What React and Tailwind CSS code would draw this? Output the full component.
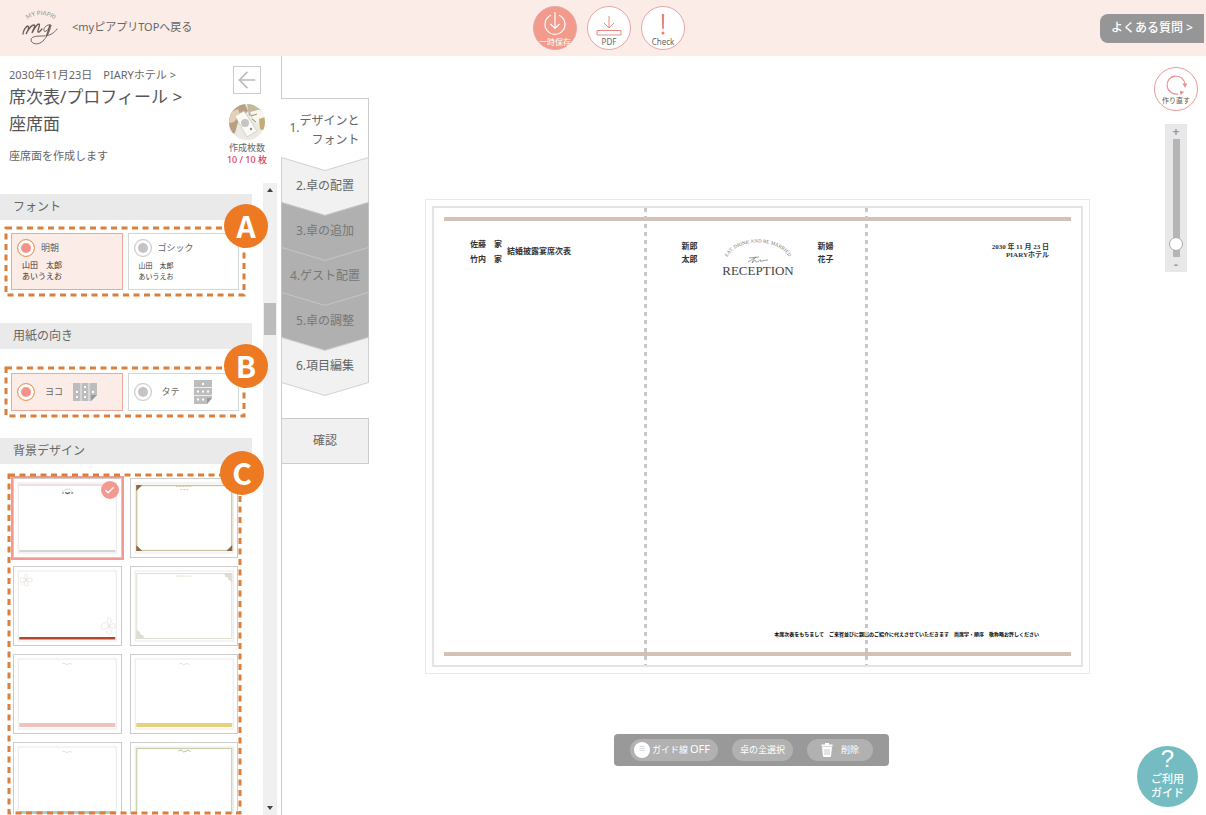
import React, { useState } from "react";
import { ArrowLeft, Check } from "lucide-react";

const steps = [
  { label: "2.卓の配置", locked: false },
  { label: "3.卓の追加", locked: true },
  { label: "4.ゲスト配置", locked: true },
  { label: "5.卓の調整", locked: true },
  { label: "6.項目編集", locked: false },
];

const designs = [
  { id: "reception", kind: "lines" },
  { id: "gold-corner", kind: "corner" },
  { id: "red-floral", kind: "bar", color: "#b5442f", thin: true, flower: true },
  { id: "lace", kind: "lace" },
  { id: "pink", kind: "bar", color: "#efc3bd" },
  { id: "yellow", kind: "bar", color: "#e3d37c" },
  { id: "mint", kind: "bar", color: "#a9cfc6" },
  { id: "leaf", kind: "leaf" },
];

function Logo() {
  return (
    <svg viewBox="0 0 36 36" className="h-9 w-9 overflow-visible" fill="none" stroke="#6b5a55" strokeLinecap="round">
      <path id="logoArc" d="M3 11 Q18 -1 35 11" stroke="none" />
      <text fontSize="6" fill="#a08f8a" stroke="none" fontFamily="Lato, sans-serif">
        <textPath href="#logoArc" startOffset="50%" textAnchor="middle">MY PIAPRI</textPath>
      </text>
      <path d="M1 24c0-3 3-8 5-8 2 1-1 6-2 8 2-4 5-9 8-9 2 0-1 5-2 8 2-4 5-9 7-9 2 1-2 6-1 8 1 1 3-2 4-3" strokeWidth="1.3" />
      <path d="M28 15c-3-1-7 3-6 6 1 2 5-2 7-6-1 6-5 15-11 18-4 2-9 0-9-3 0-4 7-4 12-4 7 0 11-3 14-7" strokeWidth="0.9" />
      <path d="M28 15l-3 10" strokeWidth="1.5" />
    </svg>
  );
}

function RoundButton({ label, filled, children }) {
  return (
    <button
      type="button"
      className={`flex h-11 w-11 flex-col items-center justify-end rounded-full border border-[#e9a5a5] pb-px text-[8px] leading-3 ${
        filled ? "bg-[#f29a8c] text-white" : "bg-white text-[#666]"
      }`}
    >
      {children}
      <span className="whitespace-nowrap">{label}</span>
    </button>
  );
}

function Header() {
  return (
    <header className="grid h-14 shrink-0 grid-cols-[1fr_auto_1fr] items-center bg-[#fbece7]">
      <div className="flex items-center gap-3.5 pl-[22px]">
        <Logo />
        <a href="#top" className="pb-0.5 text-[11px] text-[#666]">&lt;myピアプリTOPへ戻る</a>
      </div>
      <div className="flex gap-2.5 pl-3">
        <RoundButton label="一時保存" filled>
          <svg viewBox="0 0 24 24" className="h-6 w-6" fill="none" stroke="currentColor" strokeWidth="1.2">
            <path d="M8 3.2a10 10 0 1 0 8 0M12 0v16M7.500 12l4.500 4.500 4.500-4.500" />
          </svg>
        </RoundButton>
        <RoundButton label="PDF">
          <svg viewBox="0 0 26 20" className="h-5 w-[26px]" fill="none" stroke="#e58b84">
            <path d="M13 0v12M8 7l5 5 5-5M1 14.500h24v4.500H1z" />
          </svg>
        </RoundButton>
        <RoundButton label="Check">
          <svg viewBox="0 0 6 24" className="h-6 w-1.5" fill="#ea8278">
            <path d="M1.800 2h2.400l-.4 15H2.200z" />
            <circle cx="3" cy="21" r="1.500" />
          </svg>
        </RoundButton>
      </div>
      <a href="#faq" className="mr-0.5 justify-self-end rounded-l-lg bg-[#969696] px-[11px] pb-[7px] pt-[5px] text-xs font-medium leading-[17px] text-white">
        よくある質問 &gt;
      </a>
    </header>
  );
}

function ProductPhoto() {
  return (
    <svg viewBox="0 0 36 36" className="h-9 w-9">
      <clipPath id="photoClip"><circle cx="18" cy="18" r="18" /></clipPath>
      <g clipPath="url(#photoClip)">
        <rect width="36" height="36" fill="#ebe9e3" />
        <path d="M0 0h16l3 7-9 8-4 14-6 2z" fill="#b8a084" />
        <path d="M0 9l9-4 2 5-6 8-5 1z" fill="#e3d0b5" />
        <path d="M18 0h18v8l-16 4z" fill="#c4b99b" />
        <path d="M21 8l12-3 3 12-9 2z" fill="#f7f6f1" />
        <path d="M30 15l6-2v14l-5-2z" fill="#c1ac74" />
        <path d="M6 12l9-5 13 20-10 6z" fill="#fbfaf7" stroke="#c9c1b2" strokeWidth="0.600" />
        <circle cx="16" cy="19" r="4" fill="#c8c4c2" />
        <path d="M22 12l6-2M23 15l4 3" stroke="#a6914d" />
        <circle cx="22" cy="25" r="1.200" fill="#8b9a67" />
      </g>
    </svg>
  );
}

function Annotation({ letter }) {
  return (
    <>
      <svg
        className="pointer-events-none absolute inset-px h-[calc(100%-2px)] w-[calc(100%-2px)] overflow-visible"
        fill="none"
        aria-hidden="true"
      >
        <rect width="100%" height="100%" stroke="#dc7f3b" strokeWidth="3" strokeDasharray="6 4.500" />
      </svg>
      <span className="absolute -right-[23px] -top-[23px] flex h-11 w-11 items-center justify-center rounded-full bg-[#ed7a23] pb-0.5 font-['Noto_Sans_CJK_JP',sans-serif] text-3xl font-bold text-white">
        {letter}
      </span>
    </>
  );
}

function SectionTitle({ children }) {
  return <h2 className="mr-[11px] bg-[#eaeaea] pl-[13px] text-xs leading-[26px] text-[#666]">{children}</h2>;
}

function Option({ name, label, checked, onChange, children, preview }) {
  return (
    <label className={`block border px-[5px] py-1 ${checked ? "border-[#efa79c] bg-[#fbece8]" : "border-[#d3d8d9] bg-white"}`}>
      <span className={`flex h-5 items-center text-[9px] text-[#666] ${preview ? "gap-1.5" : "gap-2.5"}`}>
        <input
          type="radio"
          name={name}
          checked={checked}
          onChange={onChange}
          className="h-[18px] w-[18px] shrink-0 appearance-none rounded-full border border-[#ccc] bg-[#c4c4c4] shadow-[inset_0_0_0_3px_white] checked:border-[#e6a052] checked:bg-[#f2938a]"
        />
        {label}
        {children}
      </span>
      {preview}
    </label>
  );
}

function PaperIcon({ tall }) {
  if (tall) {
    return (
      <svg viewBox="0 0 18 24" className="ml-1 h-6 w-[18px]">
        <path d="M0 0h18v18l-5 6H0z" fill="#bdbdbd" />
        <path d="M0 7.500h18M0 15.500h18" stroke="#eee" />
        <path d="M8 3h2v2H8zM3 10.500h2v2H3zM8 10.500h2v2H8zM13 10.500h2v2h-2zM3 18.500h2v2H3zM8 18.500h2v2H8z" fill="#fff" />
        <path d="M13 18h5l-5 6z" fill="#999" />
      </svg>
    );
  }
  return (
    <svg viewBox="0 0 24 18" className="h-[18px] w-6">
      <path d="M0 0h24v12l-6 6H0z" fill="#bdbdbd" />
      <path d="M8 0v18M16 0v18" stroke="#eee" />
      <path d="M3 8h2v2H3zM3 13h2v2H3zM11 3h2v2h-2zM11 8h2v2h-2zM11 13h2v2h-2zM19 8h2v2h-2z" fill="#fff" />
      <path d="M18 12h6l-6 6z" fill="#999" />
    </svg>
  );
}

function DesignArt({ design }) {
  const { kind, color, thin, flower } = design;
  return (
    <svg viewBox="0 0 100 72" className="h-full w-full" fill="none">
      <rect x="1" y="1" width="98" height="70" stroke="#e9e9e9" />
      {kind === "lines" && (
        <>
          <path d="M2 3h96" stroke="#ecd0d3" strokeWidth="1.500" />
          <path d="M2 69h96" stroke="#aaa" />
          <path d="M45 10q5-6 10 0" stroke="#bbb" strokeWidth="0.600" />
          <path d="M45 11h1.500M48 10.500l2 1 3-1M54 11h2" stroke="#555" strokeWidth="1.200" />
        </>
      )}
      {kind === "corner" && (
        <>
          <rect x="2.500" y="3.500" width="95" height="65" stroke="#c9c3a3" strokeWidth="1.300" />
          <path d="M2 3h6l-6 6zM98 3h-6l6 6zM2 69h6l-6-6zM98 69h-6l6-6z" fill="#8d6a45" />
          <path d="M42 4.500h16M46 7.500h8" stroke="#d9cfa4" strokeDasharray="2 1" />
        </>
      )}
      {kind === "lace" && (
        <>
          <rect x="2.500" y="3.500" width="95" height="65" stroke="#e0dfd0" />
          <path d="M88 3h10v10q-2-3-4-3 1-3-3-3 0-3-3-4zM2 69V59q2 3 4 3-1 3 3 3 0 3 3 4z" fill="#deddd3" />
          <path d="M42 6h16" stroke="#d9d8bf" strokeDasharray="2 1" />
        </>
      )}
      {kind === "leaf" && (
        <>
          <rect x="2.500" y="2.500" width="95" height="75" stroke="#c8cda7" strokeWidth="1.200" />
          <path d="M44 5q3-2 4 0t4 0 4 1" stroke="#bdb9a3" />
        </>
      )}
      {kind === "bar" && (
        <>
          <rect x="2" y={thin ? 67 : 65} width="96" height={thin ? 2.5 : 4} fill={color} />
          {!flower && <path d="M45 6q2-1.500 3 0t3 0 4 .5" stroke="#dedbd6" strokeWidth="0.800" />}
        </>
      )}
      {flower && (
        <g stroke="#e6e0d8" strokeWidth="0.700">
          <path d="M9 10q-5-5-6 0t6 0q-4 5 0 6t0-6q5 4 6 0t-6 0q3-5 0-6t0 6M9 10l-5 5" />
          <path d="M92 56q-6-7-8 0t8 0q-5 7 0 8t0-8q6 5 6 0t-6 0q4-7 0-8t0 8" />
        </g>
      )}
    </svg>
  );
}

function Sidebar() {
  const [font, setFont] = useState("mincho");
  const [direction, setDirection] = useState("yoko");
  const [selected, setSelected] = useState("reception");

  return (
    <aside className="flex w-[281px] shrink-0 flex-col">
      <div className="flex h-[127px] shrink-0 justify-between pl-[9px] pr-3.5 pt-2.5 text-[#666]">
        <div>
          <p className="text-[11px] leading-[17px]">2030年11月23日　PIARYホテル &gt;</p>
          <h1 className="text-[17px] leading-[27px] text-[#555]">
            席次表/プロフィール &gt;
            <br />
            座席面
          </h1>
          <p className="mt-2.5 text-[11px] leading-[18px]">座席面を作成します</p>
        </div>
        <div className="flex flex-col items-center text-[9px] leading-3">
          <button type="button" aria-label="戻る" className="flex h-7 w-7 items-center justify-center border border-[#ccc] text-[#bbb]">
            <ArrowLeft size={26} strokeWidth={1.6} />
          </button>
          <div className="mb-0.5 mt-2.5">
            <ProductPhoto />
          </div>
          <span>作成枚数</span>
          <span className="whitespace-nowrap font-medium text-[#e0405a]">10 / 10 枚</span>
        </div>
      </div>

      <div className="flex min-h-0 flex-1">
        <div className="relative z-10 flex w-[263px] flex-col pt-[11px]">
          <SectionTitle>フォント</SectionTitle>
          <div className="relative ml-[5px] mr-[18px] mt-[7px] grid grid-cols-2 gap-[5px] p-1.5">
            <Option
              name="font"
              label="明朝"
              checked={font === "mincho"}
              onChange={() => setFont("mincho")}
              preview={
                <span className="block pb-[3px] pl-[5px] pt-0.5 font-['Liberation_Serif','Noto_Sans_CJK_JP',serif] text-[8px] leading-[11px] text-[#333]">
                  山田　太郎<br />あいうえお
                </span>
              }
            />
            <Option
              name="font"
              label="ゴシック"
              checked={font === "gothic"}
              onChange={() => setFont("gothic")}
              preview={
                <span className="block pb-[3px] pl-[5px] pt-0.5 text-[7px] leading-[11px] text-[#333]">
                  山田　太郎<br />あいうえお
                </span>
              }
            />
            <Annotation letter="A" />
          </div>

          <div className="mt-[27px]">
            <SectionTitle>用紙の向き</SectionTitle>
          </div>
          <div className="relative ml-[5px] mr-[18px] mt-[18px] grid grid-cols-2 gap-[5px] p-1.5 [&_label]:py-2">
            <Option name="direction" label="ヨコ" checked={direction === "yoko"} onChange={() => setDirection("yoko")}>
              <PaperIcon />
            </Option>
            <Option name="direction" label="タテ" checked={direction === "tate"} onChange={() => setDirection("tate")}>
              <PaperIcon tall />
            </Option>
            <Annotation letter="B" />
          </div>

          <div className="mt-[21px]">
            <SectionTitle>背景デザイン</SectionTitle>
          </div>
          <div className="relative mb-px ml-2 mr-[22px] mt-[10px] min-h-0 flex-1">
            <div className="grid h-full grid-cols-2 content-start gap-2 overflow-hidden pl-[5px] pr-[3px] pt-1">
              {designs.map((design) => (
                <button
                  key={design.id}
                  type="button"
                  aria-label={design.id}
                  onClick={() => setSelected(design.id)}
                  className={`relative h-20 p-[3px] ${
                    selected === design.id ? "outline-2 outline-[#f29a90]" : ""
                  } border border-[#ccc] bg-white`}
                >
                  <DesignArt design={design} />
                  {selected === design.id && (
                    <span className="absolute right-0.5 top-0.5 flex h-[18px] w-[18px] items-center justify-center rounded-full bg-[#f29a90] text-white">
                      <Check size={11} strokeWidth={3} />
                    </span>
                  )}
                </button>
              ))}
            </div>
            <Annotation letter="C" />
          </div>
        </div>

        <div className="flex w-3.5 flex-col items-center bg-[#f0f0f0] py-[5px]">
          <svg viewBox="0 0 6 4" className="h-1 w-1.5" fill="#444"><path d="M0 4l3-4 3 4z" /></svg>
          <span className="mt-[111px] h-8 w-3 bg-[#bcbcbc]" />
          <svg viewBox="0 0 6 4" className="mt-auto h-1 w-1.5" fill="#444"><path d="M0 0l3 4 3-4z" /></svg>
        </div>
      </div>
    </aside>
  );
}

function StepNav() {
  return (
    <nav className="flex w-[88px] shrink-0 flex-col text-xs text-[#666]">
      <span className="h-[42px] border-l border-[#ccc]" />
      <button type="button" className="flex h-[59px] items-center justify-center border-r border-t border-[#ccc] pt-1 leading-[19px]">
        <span className="pb-1.5">1.</span>
        <span className="text-right">デザインと<br />フォント</span>
      </button>
      {steps.map((step) => (
        <button key={step.label} type="button" className="relative h-[45px] pt-3">
          <svg viewBox="0 0 88 59" className="absolute left-0 top-0 h-[59px] w-[88px]" aria-hidden="true">
            <path
              d="M.5 .5L44 13.500 87.500 .5V45.500L44 58.500 .5 45.500z"
              fill={step.locked ? "#b0b0b0" : "#f1f1f1"}
              stroke={step.locked ? "#c2c2c2" : "#d0d0d0"}
            />
          </svg>
          <span className={`relative ${step.locked ? "text-[#777]" : ""}`}>{step.label}</span>
        </button>
      ))}
      <span className="h-[36px] border-l border-[#ccc]" />
      <button type="button" className="h-[46px] border border-[#ccc] bg-[#f0f0f0]">確認</button>
      <span className="flex-1 border-l border-[#ccc]" />
    </nav>
  );
}

function Emblem() {
  return (
    <svg viewBox="0 0 72 42" className="h-[42px] w-[72px] font-normal" fill="#444">
      <path id="emblemArc" d="M4 22 C14 0 58 0 68 22" fill="none" />
      <text fontSize="5" fill="#777" fontFamily="'Liberation Serif', serif">
        <textPath href="#emblemArc" startOffset="50%" textAnchor="middle">EAT, DRINK AND BE MARRIED</textPath>
      </text>
      <path d="M26 25c4-2 6-4 8-5-2 2-4 5-4 6 2-2 3-3 4-2 0 1 0 2 3 0 2-2 2-1 1 0 1 1 4-1 8-1M27 21l10-1" fill="none" stroke="#777" strokeWidth="0.700" />
      <text x="36" y="38" textAnchor="middle" fontSize="13" fontFamily="'Liberation Serif', serif">RECEPTION</text>
    </svg>
  );
}

function Sheet() {
  return (
    <div className="border border-[#e9e9e9] p-1.5">
      <div className="relative flex aspect-[650/460] flex-col border-2 border-[#e4e4e4] bg-white px-2.5 py-[9px] font-['Liberation_Serif','Noto_Sans_CJK_JP',serif] text-[8px] font-bold text-[#333]">
        <div className="h-1 bg-[#d4c1b6]" />
        <div className="grid flex-1 grid-cols-3 content-start items-start pt-4">
          <div className="flex items-center gap-[5px] pl-[26px]">
            <p className="leading-[15px]">佐藤　家<br />竹内　家</p>
            <p>結婚披露宴席次表</p>
          </div>
          <div className="flex items-start justify-center gap-6 leading-[13px]">
            <p className="pt-[3px]">新郎<br />太郎</p>
            <Emblem />
            <p className="pt-[3px]">新婦<br />花子</p>
          </div>
          <p className="pr-[22px] pt-1.5 text-right text-[7px] leading-[8px]">
            2030 年 11 月 23 日<br />PIARYホテル
          </p>
        </div>
        <p className="pb-3.5 pr-8 text-right text-[5px] leading-[7px] text-black">
          本席次表をもちまして　ご来賓並びに親族のご紹介に代えさせていただきます　尚席字・順序　敬称略お許しください
        </p>
        <div className="h-1 bg-[#d4c1b6]" />
        <span className="absolute inset-y-0 left-[32.5%] w-[3px] bg-[repeating-linear-gradient(to_bottom,#c8c8c8_0_4px,transparent_4px_8px)]" />
        <span className="absolute inset-y-0 right-[33%] w-[3px] bg-[repeating-linear-gradient(to_bottom,#c8c8c8_0_4px,transparent_4px_8px)]" />
      </div>
    </div>
  );
}

function TrashIcon() {
  return (
    <svg viewBox="0 0 12 14" className="h-3.5 w-3" fill="#fff">
      <path d="M4 0h4v1.500h3.500V3.500H.5V1.500H4zM1 4h10l-1 9q-.2 1-1 1H3q-.8 0-1-1z" />
      <path d="M4 6v6M6 6v6M8 6v6" stroke="#b1b1b1" strokeWidth="0.700" />
    </svg>
  );
}

function Toolbar() {
  return (
    <div className="flex h-8 items-center gap-3.5 rounded bg-[#999] px-4 text-[9px] text-white [&_button]:flex [&_button]:h-[22px] [&_button]:items-center [&_button]:rounded-full [&_button]:bg-[#b1b1b1]">
      <button type="button" className="gap-0.5 pl-1 pr-2">
        <span className="flex h-4 w-4 items-center justify-center rounded-full bg-white text-[7px] text-[#bbb]">≡</span>
        ガイド線 <span className="text-[11px]">OFF</span>
      </button>
      <button type="button" className="px-2">卓の全選択</button>
      <button type="button" className="gap-2 px-3.5">
        <TrashIcon />
        削除
      </button>
    </div>
  );
}

function ViewControls() {
  const [zoom, setZoom] = useState(6);
  return (
    <div className="flex w-[60px] shrink-0 flex-col items-center pt-[11px]">
      <button type="button" className="flex h-11 w-11 flex-col items-center justify-end rounded-full border border-[#ec9a98] pb-1 text-[7px] leading-[10px] text-[#555]">
        <svg viewBox="0 0 22 22" className="h-[22px] w-[22px]" fill="none" stroke="#ea8f8c" strokeWidth="1.200">
          <path d="M13 19.800A9 9 0 1 1 20 11" />
          <path d="M18.500 10h3l-1.500 2.500zM15.500 17.500l2.500.5-2 2z" fill="#ea8f8c" />
        </svg>
        作り直す
      </button>
      <div className="mt-[13px] flex w-[22px] flex-col items-center bg-[#e8e8e8] text-[12px] font-bold leading-[15px] text-[#999]">
        <span>+</span>
        <input
          type="range"
          aria-label="拡大"
          value={zoom}
          onChange={(e) => setZoom(Number(e.target.value))}
          className="h-[118px] w-3.5 appearance-none bg-[linear-gradient(to_right,transparent_4px,#b5b5b5_4px_11px,transparent_11px)] [direction:rtl] [writing-mode:vertical-lr] [&::-webkit-slider-thumb]:h-3.5 [&::-webkit-slider-thumb]:w-3.5 [&::-webkit-slider-thumb]:appearance-none [&::-webkit-slider-thumb]:rounded-full [&::-webkit-slider-thumb]:border [&::-webkit-slider-thumb]:border-[#aaa] [&::-webkit-slider-thumb]:bg-white"
        />
        <span>-</span>
      </div>
    </div>
  );
}

function App() {
  return (
    <div className="relative flex h-screen flex-col overflow-hidden bg-white font-['Noto_Sans','Noto_Sans_CJK_JP',sans-serif]">
      <Header />
      <div className="flex min-h-0 flex-1">
        <Sidebar />
        <StepNav />
        <main className="flex flex-1 flex-col pt-[143px]">
          <div className="px-14">
            <Sheet />
          </div>
          <div className="mt-[60px] flex justify-center pr-3">
            <Toolbar />
          </div>
        </main>
        <ViewControls />
      </div>
      <a href="#guide" className="absolute bottom-2 right-2 flex h-[61px] w-[61px] flex-col items-center rounded-full bg-[#74bcc2] text-[11px] font-medium leading-[14px] text-white">
        <span className="font-['Liberation_Sans',sans-serif] text-2xl font-normal leading-[26px]">?</span>
        <span>ご利用</span>
        <span>ガイド</span>
      </a>
    </div>
  );
}

export default App;
